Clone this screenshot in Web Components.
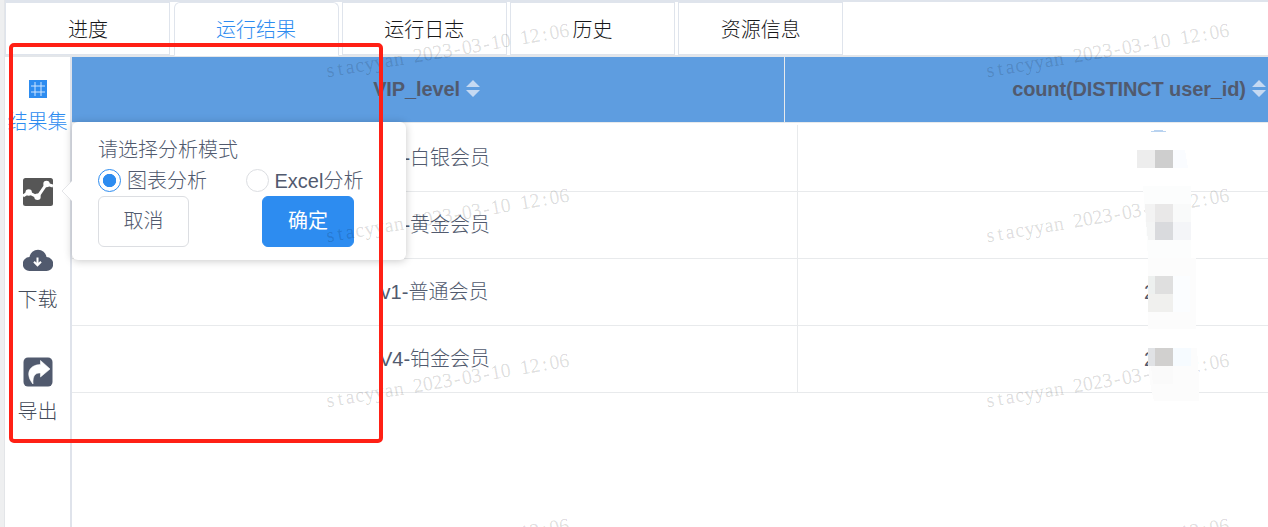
<!DOCTYPE html>
<html lang="zh-CN">
<head>
<meta charset="utf-8">
<title>运行结果</title>
<style>
html,body{margin:0;height:100%;overflow:hidden;background:#fff}
body{font:300 20px/30px "Liberation Sans","Noto Sans CJK SC",sans-serif;color:#515a6e}
</style>
</head>
<body>
<result-app></result-app>
<script>
const define=(name,html,init)=>{
  customElements.define(name,class extends HTMLElement{
    constructor(){
      super();
      this.attachShadow({mode:'open'}).innerHTML=html;
    }
    connectedCallback(){ if(init) init.call(this,this.shadowRoot); }
  });
};

define('result-tab',`<style>
:host{display:block;box-sizing:border-box;width:165px;height:53px;border:1px solid #dfe4ec;text-align:center;line-height:55px;color:#17181a;background:#fff}
:host([active]){height:54px;border-bottom-color:#fff;border-radius:6px 6px 0 0;color:#2d8cf0}
</style><slot></slot>`);

define('tab-bar',`<style>
:host{display:flex;box-sizing:border-box;gap:3.2px;height:57px;padding-left:.4px;border-top:2px solid #dfe4ec;border-bottom:2px solid #e3e6ea;background:#fff}
</style><slot></slot>`);

define('tool-item',`<style>
:host{display:flex;flex-direction:column;align-items:center;white-space:nowrap;color:#444b59}
:host([active]){color:#2d8cf0}
::slotted(svg){display:block}
</style><slot name="icon"></slot><slot></slot>`);

define('side-tools',`<style>
:host{display:block;box-sizing:border-box;width:67px;border-right:2px solid #dfe3eb;background:#fff}
tool-item.set{padding-top:23px}
tool-item.set svg{margin-bottom:9px}
tool-item.chart{padding-top:41px}
tool-item.down{padding-top:43px}
tool-item.down svg{margin-bottom:14px}
tool-item.out{padding-top:42px}
tool-item.out svg{margin-bottom:10px}
</style>
<tool-item class="set" active><svg slot="icon" width="18" height="18" viewBox="0 0 18 18"><rect width="18" height="18" fill="#2d8cf0"/><path d="M6 2v14M12 2v14M2 6h14M2 12h14" stroke="#cfe5ff" stroke-width="1"/></svg>结果集</tool-item>
<tool-item class="chart"><svg slot="icon" width="30" height="28" viewBox="0 0 30 28"><rect width="30" height="28" rx="2.500" fill="#565656"/><path d="M0 18L5.500 14.500L14.500 19L23.500 6L30 8" fill="none" stroke="#fff" stroke-width="3"/><circle cx="5.700" cy="14.500" r="3.200" fill="#fff"/><circle cx="14.500" cy="18.800" r="3.200" fill="#fff"/><circle cx="23.500" cy="6" r="3.200" fill="#fff"/></svg></tool-item>
<tool-item class="down"><svg slot="icon" width="30" height="22" viewBox="0 0 30 22"><path d="M7 22A6.800 6.800 0 0 1 6.500 8A8.600 8.600 0 0 1 23.500 8A7 7 0 0 1 23 22Z" fill="#515a6e"/><path d="M14.500 8.500v7.500M11 12.800l3.500 3.500L18 12.800" fill="none" stroke="#fff" stroke-width="2"/></svg>下载</tool-item>
<tool-item class="out"><svg slot="icon" width="30" height="30" viewBox="0 0 30 30"><rect x=".5" y=".5" width="29" height="29" rx="4.500" fill="#515a6e"/><path d="M17.500 3.500L27 12L17.500 20V16C12.500 15.500 9.500 18.500 10 27C2.500 18 5 8 17.500 7.500Z" fill="#fff" stroke="#fff" stroke-width=".6" stroke-linejoin="round"/></svg>导出</tool-item>`);

define('head-cell',`<style>
:host{display:flex;box-sizing:border-box;justify-content:center;align-items:center;gap:6px;height:65px;padding-bottom:1px;border-right:1px solid #e8eaec;background:#5e9de0;color:#515a6e;font-weight:700;letter-spacing:-.13px;white-space:nowrap}
svg{display:block;margin-bottom:1px}
</style><slot></slot><svg width="14" height="17" viewBox="0 0 14 17"><path d="M7 0l7 7H0zM7 17l7-7H0z" fill="#c5d9f2"/></svg>`);

define('body-cell',`<style>
:host{display:flex;box-sizing:border-box;justify-content:center;align-items:center;height:67px;border-right:1px solid #e8eaec;border-bottom:1px solid #e8eaec;color:#515a6e;background:#fff}
</style><slot></slot>`);

define('result-table',`<style>
:host{display:block;overflow:hidden;flex:1;min-width:0}
.head{display:grid;grid-template-columns:713px 709px;border-bottom:1px solid #e8eaec}
.head head-cell:first-child{padding-right:3px}
.body{display:grid;grid-template-columns:726px 709px;padding-top:2px}
.num{justify-content:flex-start;padding-left:346px}
</style>
<div class="head"><head-cell>VIP_level</head-cell><head-cell>count(DISTINCT user_id)</head-cell></div>
<div class="body">
<body-cell>V2-白银会员</body-cell><body-cell></body-cell>
<body-cell>V3-黄金会员</body-cell><body-cell></body-cell>
<body-cell>v1-普通会员</body-cell><body-cell class="num">2</body-cell>
<body-cell>V4-铂金会员</body-cell><body-cell class="num">2</body-cell>
</div>`);

define('radio-item',`<style>
:host{display:flex;align-items:center;gap:6px;line-height:30px;white-space:nowrap}
i{box-sizing:border-box;width:23px;height:23px;margin-bottom:2px;border:1px solid #dcdee2;border-radius:50%;background:#fff}
:host([checked]) i{border-color:#2d8cf0;background:radial-gradient(circle,#2d8cf0 6.300px,#fff 7px)}
</style><i></i><slot></slot>`);

define('push-button',`<style>
:host{display:block;box-sizing:border-box;width:91px;height:51px;border:1px solid #dcdee2;border-radius:6px;text-align:center;line-height:48px;background:#fff}
:host([primary]){width:92px;border-color:#2d8cf0;background:#2d8cf0;color:#fff;font-weight:400}
</style><slot></slot>`);

define('mode-popover',`<style>
:host{position:absolute;left:72px;top:122px;box-sizing:border-box;width:334px;height:138px;padding:13px 26px 0;border-radius:6px;background:#fff;box-shadow:0 1px 9px rgba(0,0,0,.22)}
svg{position:absolute;left:-11px;top:58px}
.radios{display:flex;gap:38.500px;height:30px;margin-top:1px}
.actions{display:flex;gap:73px}
</style>
<svg width="12" height="22" viewBox="0 0 12 22"><path d="M12 0L1 11L12 22Z" fill="#fff"/><path d="M11 1L1 11L11 21" fill="none" stroke="#e4e5e8"/></svg>
<div>请选择分析模式</div>
<div class="radios"><radio-item checked>图表分析</radio-item><radio-item>Excel分析</radio-item></div>
<div class="actions"><push-button>取消</push-button><push-button primary>确定</push-button></div>`);

define('water-mark',`<style>
:host{position:absolute;inset:0;overflow:hidden;pointer-events:none}
svg{display:block}
.a{font:400 20px "Liberation Serif",serif;fill:#000;fill-opacity:.13;stroke:#000;stroke-opacity:.03;stroke-width:1px;text-anchor:middle}
.b{font:400 20px "Liberation Sans",sans-serif;fill:#000;fill-opacity:.012}
</style><svg width="1268" height="527"></svg>`,function(root){
  const xs=n=>Array.from({length:n},(_,i)=>(i*9.88+5).toFixed(2)).join(' ');
  const name='stacyyan 2023-03-10 12:06';
  let out='';
  for(const x of [326.5,986.5]) for(const y of [77.5,242.5,407.5,572.5])
    out+=`<text class="a" x="${xs(name.length)}" transform="translate(${x} ${y}) rotate(-9.6)">${name}</text>`;
  for(const x of [31,335,638,941,1244]) for(const y of [111,252,400,534])
    out+=`<text class="b" x="${x}" y="${y}" textLength="214">xinyunzhou 2023-03-10</text>`;
  root.querySelector('svg').innerHTML=out;
});

define('pixel-mask',`<style>
:host{position:absolute;left:1130px;top:124px}
svg{display:block}
</style><svg width="75" height="286" viewBox="1130 124 75 286" shape-rendering="crispEdges">
<path d="M1149 132Q1159 128 1168 132Z" fill="#b9d3f0"/>
<path d="M1137 150h18v18h-18z" fill="#ededed"/><path d="M1155 150h18v18h-18z" fill="#cecece"/><path d="M1173 150h12l3 18h-15z" fill="#fafcff"/>
<path d="M1143 186h48v72h-43z" fill="#fcfdfd"/>
<path d="M1145 204h10v18h-9z" fill="#f3f3f3"/><path d="M1155 204h18v18h-18z" fill="#e9e8e8"/><path d="M1173 204h18v18h-18z" fill="#f9fafa"/>
<path d="M1146 222h9v18h-7z" fill="#f4f5f5"/><path d="M1155 222h18v18h-18z" fill="#d9dadd"/><path d="M1173 222h18v18h-18z" fill="#f4f5f8"/>
<path d="M1148 258h48v71h-48z" fill="#fcfcfc"/><path d="M1148 276h25v36h-25z" fill="#f0f0ee"/><path d="M1149 276h6v18h-6z" fill="#edf0ef"/><path d="M1155 276h18v18h-18z" fill="#dfdfdf"/><path d="M1173 276h17v36h-17z" fill="#fbfdff"/>
<path d="M1148 348h49l2 30v23h-45q-6-20-6-53z" fill="#fcfcfc"/><path d="M1148 348h7v18h-7z" fill="#e0e2e5"/><path d="M1155 348h18v18h-18z" fill="#d1d0cf"/><path d="M1173 348h18v18h-18z" fill="#f6fbff"/><path d="M1151 366h22v18h-20z" fill="#fafafa"/>
</svg>`);

define('focus-frame',`<style>
:host{position:absolute;left:9px;top:43px;box-sizing:border-box;width:374px;height:400px;border:4px solid #ff2015;border-radius:5px;pointer-events:none}
</style>`);

define('result-app',`<style>
:host{display:block;position:relative;box-sizing:border-box;height:100vh;padding-left:5px;overflow:hidden;background:linear-gradient(90deg,#eeeff0 0 4px,#e3e5e8 4px 5px,#fff 5px)}
main{display:flex;height:calc(100vh - 57px)}
</style>
<tab-bar><result-tab>进度</result-tab><result-tab active>运行结果</result-tab><result-tab>运行日志</result-tab><result-tab>历史</result-tab><result-tab>资源信息</result-tab></tab-bar>
<main><side-tools></side-tools><result-table></result-table></main>
<mode-popover></mode-popover><water-mark></water-mark><pixel-mask></pixel-mask><focus-frame></focus-frame>`);
</script>
</body>
</html>
